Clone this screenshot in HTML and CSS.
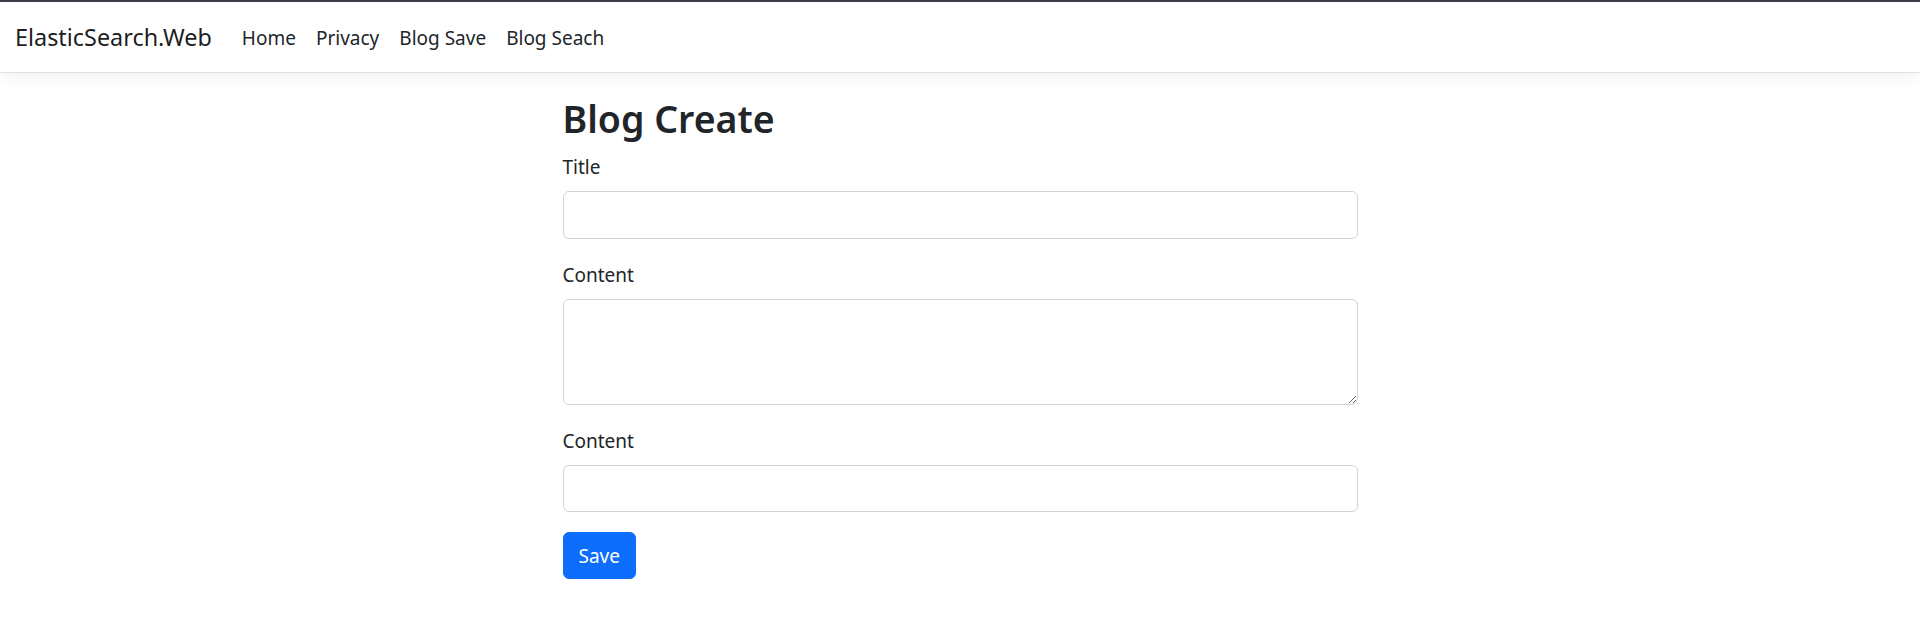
FILE: index.html
```html
<!DOCTYPE html>
<html lang="en">
<head>
<meta charset="utf-8">
<title>Blog Create - ElasticSearch.Web</title>
<link rel="stylesheet" href="styles.css">
</head>
<body>
<header>
  <nav class="navbar">
    <div class="navbar-inner">
      <a class="brand" href="#">ElasticSearch.Web</a>
      <ul class="nav">
        <li><a class="nav-link" href="#">Home</a></li>
        <li><a class="nav-link" href="#">Privacy</a></li>
        <li><a class="nav-link" href="#">Blog Save</a></li>
        <li><a class="nav-link" href="#">Blog Seach</a></li>
      </ul>
    </div>
  </nav>
</header>
<main class="container">
  <div class="row">
    <div class="col">
      <h2 class="title">Blog Create</h2>
      <form>
        <div class="field">
          <label class="form-label">Title</label>
          <input class="form-control" type="text">
        </div>
        <div class="field">
          <label class="form-label">Content</label>
          <textarea class="form-control textarea" rows="3"></textarea>
        </div>
        <div class="field">
          <label class="form-label">Content</label>
          <input class="form-control" type="text">
        </div>
        <button class="btn" type="button">Save</button>
      </form>
    </div>
  </div>
</main>
</body>
</html>
```
FILE: styles.css
```css
* { box-sizing: border-box; }
html, body { margin: 0; padding: 0; }
body {
  font-family: "Noto Sans", "Open Sans", sans-serif;
  font-size: 19px;
  line-height: 30px;
  color: #212529;
  background: #fff;
  border-top: 2px solid #3a3d43;
}
a { text-decoration: none; }
.navbar {
  background: #fff;
  border-bottom: 1px solid #dee2e6;
  box-shadow: 0 5px 15px rgba(0,0,0,.05);
  padding: 10px 0;
  margin-bottom: 20px;
}
.navbar-inner {
  display: flex;
  align-items: center;
  padding: 0 15px;
}
.brand {
  font-size: 23.4px;
  line-height: 37.5px;
  padding: 7px 0 5px;
  margin-right: 20px;
  color: rgba(0,0,0,.9);
}
.nav {
  display: flex;
  list-style: none;
  margin: 0;
  padding: 0;
}
.nav-link {
  display: block;
  padding: 11px 10px 9px;
  color: #212529;
}
.container {
  max-width: 1650px;
  margin: 0 auto;
  padding: 0 15px;
}
.row { display: flex; margin: 0 -15px; }
.col { width: 50%; margin-left: 25%; padding: 0 15px; }
.title {
  margin: 0 0 8px;
  padding-top: 2px;
  font-size: 37.5px;
  font-weight: 600;
  line-height: 48px;
}
.field { margin-bottom: 20px; }
.form-label { display: inline-block; padding-top: 1px; margin-bottom: 9px; }
.form-control {
  display: block;
  width: 100%;
  font: inherit;
  padding: 7.5px 15px;
  height: 47.5px;
  border: 1px solid #ced4da;
  border-radius: 6px;
  background: #fff;
  color: #212529;
}
.textarea { height: 106px; resize: vertical; }
.btn {
  font: inherit;
  color: #fff;
  background: #0d6efd;
  border: 1px solid #0d6efd;
  border-radius: 6px;
  padding: 8px 15px 7px;
  line-height: 30px;
}
```
